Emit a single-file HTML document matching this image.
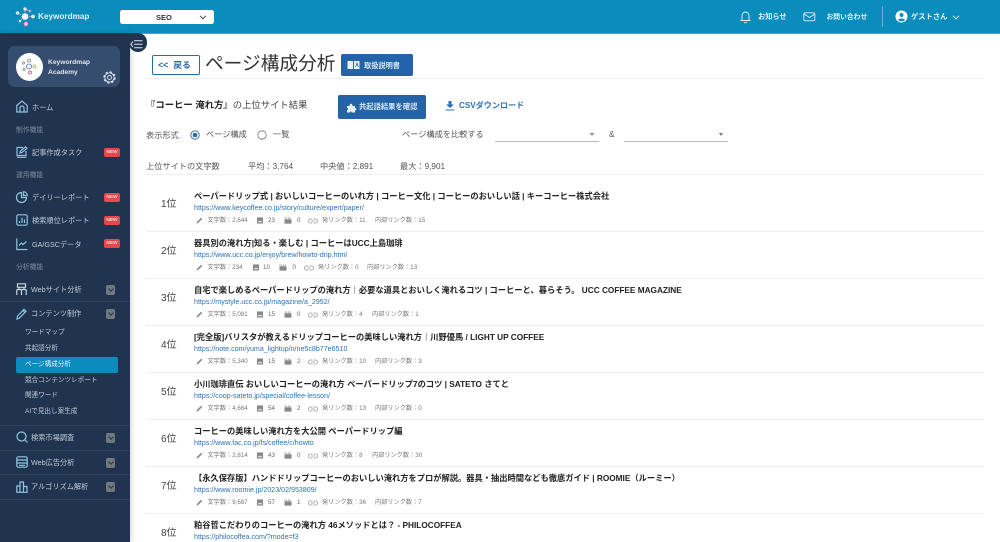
<!DOCTYPE html>
<html lang="ja"><head><meta charset="utf-8"><style>
html,body{margin:0;padding:0;width:1000px;height:542px;overflow:hidden;background:#fff}
body{position:relative;font-family:"Liberation Sans","Noto Sans CJK JP",sans-serif;color:#333}
.a{position:absolute;white-space:nowrap;line-height:1}
svg{position:absolute;overflow:visible}
.nav{color:#c3ccd6;font-size:7.2px}
.sec{color:#7d8b9b;font-size:6.8px}
.new{position:absolute;left:104px;width:16px;height:9px;background:#e5474b;border-radius:2px;color:#f8d5d5;font-size:4.8px;font-weight:bold;text-align:center;line-height:9px}
.chev{position:absolute;left:105.5px;width:9.5px;height:10px;background:#72787f;border-radius:2px}
.chev:after{content:"";position:absolute;left:3px;top:2.2px;width:3px;height:3px;border-right:1px solid #20344f;border-bottom:1px solid #20344f;transform:rotate(45deg)}
.ln{position:absolute;left:0;width:130px;height:1px;background:#2d4461}
.ic{fill:none;stroke:#8fc4df;stroke-width:1.2}
.sub{color:#c3ccd6;font-size:6.6px;left:25px}
.t{left:194px;font-size:8.25px;font-weight:bold;color:#222;margin-top:1px}
.u{left:194px;font-size:7.1px;color:#2a72b8}
.m{font-size:6.2px;color:#777}
.m2{font-size:6.2px;color:#666}
.r{left:161px;font-size:10px;color:#444;margin-top:1px}
.hr{position:absolute;left:146px;width:838px;height:1px;background:#eee}
.g{color:#555;font-size:8.2px}
</style></head><body>

<!-- header -->
<div class="a" style="left:0;top:0;width:1000px;height:33px;background:#0a8dbd"></div>
<div class="a" style="left:0;top:32.5px;width:1000px;height:1px;background:#41a9cd"></div>
<svg style="left:15px;top:7px" width="26" height="20" viewBox="0 0 26 20">
<g stroke="#e5eef4" stroke-width=".6" fill="none"><path d="M10 9.500L2.500 6M10 9.500L10 2M10 9.500L18 9.500M10 9.500L11 17M10 2L15 4M10 9.500L5 14"/></g>
<circle cx="10" cy="9.500" r="3.800" fill="#fff" stroke="#3a70c0" stroke-width="1"/>
<circle cx="2.500" cy="6" r="1.700" fill="#d8e4ec"/><circle cx="10" cy="2" r="1.700" fill="#e9d9dc"/><circle cx="15" cy="4" r="1.300" fill="#c9a4b4"/>
<circle cx="18" cy="9.500" r="1.900" fill="#d9ecc8"/><circle cx="11" cy="17" r="2.200" fill="#f4c8e0" stroke="#d04a90" stroke-width=".7"/><circle cx="5" cy="14" r="1.300" fill="#e8e8e8"/>
</svg>
<div class="a" style="left:38px;top:12.5px;font-size:8.2px;color:#e6f1f7;font-weight:bold">Keywordmap</div>
<div class="a" style="left:120px;top:9.5px;width:94px;height:14px;background:#fff;border-radius:2.5px"></div>
<div class="a" style="left:156px;top:13.500px;font-size:7.500px;font-weight:bold;color:#333">SEO</div>
<svg style="left:199px;top:14.5px" width="8" height="5" viewBox="0 0 8 5"><path d="M1 .8L4 3.8L7 .8" fill="none" stroke="#444" stroke-width="1"/></svg>

<svg style="left:738.500px;top:10px" width="13" height="14" viewBox="0 0 13 14" fill="none" stroke="#e6f3f8" stroke-width=".9"><path d="M1.500 10.500h10M3 10.500V5.500a3.500 3.500 0 0 1 7 0v5M5 12.700h3"/></svg>
<div class="a" style="left:758px;top:13px;font-size:7.200px;font-weight:bold;color:#e6f3f8">お知らせ</div>
<svg style="left:803px;top:12px" width="13" height="10" viewBox="0 0 13 10" fill="none" stroke="#e6f3f8" stroke-width=".9"><rect x=".8" y=".8" width="11" height="8" rx="1.4"/><path d="M1 2l5.5 3.5L12 2"/></svg>
<div class="a" style="left:826.5px;top:14.500px;font-size:6.800px;font-weight:bold;color:#e6f3f8">お問い合わせ</div>
<div class="a" style="left:882px;top:6px;width:1px;height:21px;background:#5fb4d2"></div>
<svg style="left:895px;top:10px" width="13" height="13" viewBox="0 0 13 13"><circle cx="6.5" cy="6.5" r="6" fill="#fff"/><circle cx="6.5" cy="5" r="2" fill="#0a8dbd"/><path d="M3 10c.6-2 6.4-2 7 0a5 5 0 0 1-7 0z" fill="#0a8dbd"/></svg>
<div class="a" style="left:911px;top:12.5px;font-size:7.300px;color:#e6f3f8;font-weight:bold">ゲストさん</div>
<svg style="left:952px;top:14.5px" width="8" height="5" viewBox="0 0 8 5"><path d="M1 .8L4 3.8L7 .8" fill="none" stroke="#e6f3f8" stroke-width="1"/></svg>

<!-- sidebar -->
<div class="a" style="left:0;top:33px;width:130px;height:509px;background:#20344f;box-shadow:2px 0 5px rgba(0,0,0,.14)"></div>
<div class="a" style="left:129px;top:33px;width:18px;height:19px;background:#20344f;border-radius:0 9px 9px 9px"></div>
<svg style="left:130px;top:40px" width="13" height="9" viewBox="0 0 13 9" fill="none" stroke="#dfe8ef" stroke-width="1"><path d="M3 1.500L.8 4.200L3 7M4 .8h8.500M4 4.200h8.500M4 7.800h8.500"/></svg>
<div class="a" style="left:8px;top:46px;width:112px;height:41px;background:#354d6e;border-radius:7px"></div>
<div class="a" style="left:15.500px;top:52.500px;width:27px;height:28px;background:#fff;border-radius:50%"></div>
<svg style="left:21px;top:58px" width="17" height="17" viewBox="0 0 17 17"><g fill="none" stroke-width=".8"><circle cx="8" cy="8.500" r="2.500" stroke="#3a70c0"/><circle cx="8" cy="2.500" r="1.500" stroke="#888"/><circle cx="2.500" cy="5" r="1.100" stroke="#888"/><circle cx="13.500" cy="8.500" r="1.500" stroke="#9b6"/><circle cx="9" cy="14.500" r="1.500" stroke="#d04a70"/><circle cx="3" cy="11.500" r="1.100" stroke="#888"/></g></svg>
<div class="a" style="left:48px;top:60px;font-size:6.700px;font-weight:bold;color:#dfe6ee">Keywordmap</div>
<div class="a" style="left:48px;top:70px;font-size:6.700px;font-weight:bold;color:#dfe6ee">Academy</div>
<svg style="left:103px;top:71px" width="13" height="13" viewBox="0 0 13 13" fill="none" stroke="#dfe6ee"><circle cx="6.500" cy="6.500" r="2" stroke-width=".9"/><circle cx="6.500" cy="6.500" r="4.600" stroke-width=".9"/><circle cx="6.500" cy="6.500" r="5.500" stroke-width="1.300" stroke-dasharray="2.300 2.020"/></svg>

<svg style="left:16px;top:100px" width="12" height="13" viewBox="0 0 12 13"><path class="ic" d="M.8 5.500L6 1l5.200 4.500V12H.8zM4 12V8a2 2 0 0 1 4 0v4"/></svg>
<div class="a nav" style="left:32px;top:104px">ホーム</div>
<div class="a sec" style="left:16px;top:128px">制作機能</div>
<svg style="left:16px;top:146px" width="12" height="12" viewBox="0 0 12 12"><path class="ic" d="M7 1.500H1v8h9V5M4 7l.5-2L9.500.8l1.500 1.500L6 6.500zM1 11.300h9.500"/></svg>
<div class="a nav" style="left:32px;top:149px">記事作成タスク</div>
<div class="new" style="top:148px">NEW</div>
<div class="a sec" style="left:16px;top:173px">運用機能</div>
<svg style="left:16px;top:191px" width="12" height="12" viewBox="0 0 12 12"><path class="ic" d="M5.500 1.500a5 5 0 1 0 5 5h-5zM7.500 .7a4 4 0 0 1 3.800 3.800H7.500z"/></svg>
<div class="a nav" style="left:32px;top:194px">デイリーレポート</div>
<div class="new" style="top:193px">NEW</div>
<svg style="left:16px;top:214px" width="12" height="12" viewBox="0 0 12 12"><rect class="ic" x=".8" y=".8" width="10.400" height="10.400" rx="1.500"/><path class="ic" d="M3.500 9V7M6 9V3.500M8.500 9V5.500"/></svg>
<div class="a nav" style="left:32px;top:217px">検索順位レポート</div>
<div class="new" style="top:216px">NEW</div>
<svg style="left:16px;top:238px" width="12" height="12" viewBox="0 0 12 12"><path class="ic" d="M.8 .5V11.500H11.500M3 7.500L5.500 5l1.500 1.500L10.500 3.500"/></svg>
<div class="a nav" style="left:32px;top:241px">GA/GSCデータ</div>
<div class="new" style="top:239px">NEW</div>
<div class="a sec" style="left:16px;top:265px">分析機能</div>
<svg style="left:16px;top:283px" width="11" height="13" viewBox="0 0 11 13"><path class="ic" style="stroke:#c8d4de" d="M1.500 .8h8v3.500h-8zM.8 6.500h9.400M.8 6.500v5.500M5.500 6.500v5.500M10.200 6.500v5.500M3 4.300v2.200M8 4.300v2.200"/></svg>
<div class="a nav" style="left:31px;top:286px">Webサイト分析</div>
<div class="chev" style="top:285px"></div>
<div class="ln" style="top:301px"></div>
<svg style="left:16px;top:308px" width="11" height="12" viewBox="0 0 11 12"><path class="ic" d="M1 11l.6-3L8 1.200l2 2L3.500 10zM7 2.500l2 2"/></svg>
<div class="a nav" style="left:31px;top:310px">コンテンツ制作</div>
<div class="chev" style="top:309px"></div>
<div class="a sub" style="top:330px">ワードマップ</div>
<div class="a sub" style="top:346px">共起語分析</div>
<div class="a" style="left:16px;top:356.500px;width:101.500px;height:16px;background:#0a8dbd;border-radius:2px"></div>
<div class="a sub" style="top:362px;color:#e4f0f6">ページ構成分析</div>
<div class="a sub" style="top:377.500px">競合コンテンツレポート</div>
<div class="a sub" style="top:393px">関連ワード</div>
<div class="a sub" style="top:408.500px">AIで見出し案生成</div>
<div class="ln" style="top:425px"></div>
<svg style="left:16px;top:431px" width="12" height="12" viewBox="0 0 12 12"><circle class="ic" cx="5.500" cy="5.500" r="4.500"/><path class="ic" d="M8.500 8.500L11.500 11.500"/></svg>
<div class="a nav" style="left:31px;top:434px">検索市場調査</div>
<div class="chev" style="top:433px"></div>
<div class="ln" style="top:450px"></div>
<svg style="left:16px;top:456px" width="12" height="12" viewBox="0 0 12 12"><rect class="ic" x=".8" y=".8" width="10.400" height="10.400" rx="1.500"/><path class="ic" d="M.8 4h10.400M.8 7h10.400M3 9.300h6"/></svg>
<div class="a nav" style="left:31px;top:459px">Web広告分析</div>
<div class="chev" style="top:458px"></div>
<div class="ln" style="top:474px"></div>
<svg style="left:16px;top:481px" width="12" height="12" viewBox="0 0 12 12"><path class="ic" d="M.8 11.300V5h3.200v6.300M4 11.300V1h3.500v10.300M7.500 11.300V5.500h3.500v5.800M.3 11.300h11.400"/></svg>
<div class="a nav" style="left:31px;top:483px">アルゴリズム解析</div>
<div class="chev" style="top:482px"></div>
<div class="ln" style="top:499px"></div>

<!-- page head -->
<div class="a" style="left:152px;top:55px;box-sizing:border-box;width:48px;height:20px;border:1px solid #2b69ad;border-radius:2px;color:#2b69ad;font-size:8.800px;line-height:18px;padding-left:5px;font-weight:bold;word-spacing:2.500px">&lt;&lt; 戻る</div>
<div class="a" style="left:205px;top:55px;font-size:18.700px;color:#333">ページ構成分析</div>
<div class="a" style="left:341px;top:53.500px;width:71.500px;height:22.500px;background:#2563a9;border-radius:2px"></div>
<svg style="left:346.500px;top:60px" width="13" height="10" viewBox="0 0 13 10"><path d="M.5 1h5.500v8H.5zM7 1h5.500v8H7z" fill="#e8f0f7"/><path d="M8.500 7L10 3l1.500 4" fill="none" stroke="#2563a9" stroke-width=".8"/></svg>
<div class="a" style="left:364px;top:62px;font-size:7.200px;font-weight:bold;color:#dbe6f1">取扱説明書</div>
<div class="hr" style="top:78px"></div>

<div class="a" style="left:146px;top:101px;font-size:9.350px;color:#444"><b style="color:#222">『コーヒー 淹れ方』</b>の上位サイト結果</div>
<div class="a" style="left:338px;top:95px;width:88px;height:23.500px;background:#2563a9;border-radius:2px"></div>
<svg style="left:346px;top:101.500px" width="11" height="11" viewBox="0 0 11 11"><path d="M1 4h2.500c0-3 3-3 3 0H9v2.200c1.800-.4 1.800 2.600 0 2.300V10.500H5.500c.3-1.500-2-1.500-1.700 0H1V8c1.500.3 1.500-2.300 0-2z" fill="#e8f0f7"/></svg>
<div class="a" style="left:359px;top:103px;font-size:7.300px;font-weight:bold;color:#dbe6f1">共起語結果を確認</div>
<svg style="left:445px;top:100.500px" width="10" height="10" viewBox="0 0 10 10"><path d="M3.500 0h3v3.500H9L5 7 1 3.500h2.500zM.5 8.500h9v1h-9z" fill="#2b72bd"/></svg>
<div class="a" style="left:459px;top:101.500px;font-size:8.100px;color:#2b72bd;font-weight:bold">CSVダウンロード</div>

<div class="a g" style="left:146px;top:131.500px">表示形式</div>
<svg style="left:190px;top:129.500px" width="10" height="10" viewBox="0 0 10 10"><circle cx="5" cy="5" r="4.200" fill="none" stroke="#2b69ad" stroke-width=".9"/><circle cx="5" cy="5" r="2.300" fill="#2b69ad"/></svg>
<div class="a g" style="left:206px;top:131px">ページ構成</div>
<svg style="left:257px;top:129.500px" width="10" height="10" viewBox="0 0 10 10"><circle cx="5" cy="5" r="4.200" fill="none" stroke="#777" stroke-width=".8"/></svg>
<div class="a g" style="left:273px;top:131px">一覧</div>
<div class="a g" style="left:402px;top:131px">ページ構成を比較する</div>
<div class="a" style="left:495px;top:141px;width:104px;height:1px;background:#bbb"></div>
<div class="a" style="left:589.500px;top:133px;width:0;height:0;border:2.500px solid transparent;border-top:3px solid #777"></div>
<div class="a g" style="left:609px;top:131px">&amp;</div>
<div class="a" style="left:624px;top:141px;width:104px;height:1px;background:#bbb"></div>
<div class="a" style="left:718.500px;top:133px;width:0;height:0;border:2.500px solid transparent;border-top:3px solid #777"></div>

<div class="a g" style="left:146px;top:162.500px">上位サイトの文字数</div>
<div class="a g" style="left:248px;top:162.500px">平均：3,764</div>
<div class="a g" style="left:320px;top:162.500px">中央値：2,891</div>
<div class="a g" style="left:400px;top:162.500px">最大：9,901</div>
<div class="hr" style="top:174px"></div>

<!-- reusable meta icons -->
<svg width="0" height="0" style="left:0;top:0"><defs>
<symbol id="pen" viewBox="0 0 8 8"><path d="M.5 7.500l.6-2L5.800.8l1.400 1.400L2.500 6.900z" fill="#888"/></symbol>
<symbol id="pic" viewBox="0 0 8 8"><path d="M.5.5h7v7h-7z" fill="#888"/><path d="M1.500 6l1.500-2 1.200 1.300L5.300 4l1.300 2z" fill="#eee"/></symbol>
<symbol id="film" viewBox="0 0 9 8"><path d="M.5 2.500h8v5h-8zM.5 .5h1v1.500h-1zM2.500 .5h1v1.500h-1zM4.500 .5h1v1.500h-1zM6.500 .5h1v1.500h-1z" fill="#888"/></symbol>
<symbol id="lnk" viewBox="0 0 10 6"><path d="M4.500 1H2.500a2 2 0 0 0 0 4h2M5.500 1h2a2 2 0 0 1 0 4h-2M3 3h4" fill="none" stroke="#999" stroke-width=".8"/></symbol>
</defs></svg>

<!-- row 1 -->
<div class="a r" style="top:198.500px">1位</div>
<div class="a t" style="top:191.500px">ペーパードリップ式 | おいしいコーヒーのいれ方 | コーヒー文化 | コーヒーのおいしい話 | キーコーヒー株式会社</div>
<div class="a u" style="top:204.500px">https://www.keycoffee.co.jp/story/culture/expert/paper/</div>
<svg style="left:195.500px;top:216.500px" width="7" height="7"><use href="#pen"/></svg><div class="a m" style="left:207.500px;top:218px">文字数：2,644</div>
<svg style="left:256px;top:216.500px" width="8" height="7"><use href="#pic"/></svg><div class="a m2" style="left:268px;top:218px">23</div>
<svg style="left:283px;top:216.500px" width="10" height="7"><use href="#film"/></svg><div class="a m2" style="left:297px;top:218px">0</div>
<svg style="left:308px;top:217.500px" width="10" height="6"><use href="#lnk"/></svg><div class="a m" style="left:322px;top:218px">発リンク数：11</div>
<div class="a m" style="left:375px;top:218px">内部リンク数：15</div>
<div class="hr" style="top:231px"></div>

<!-- row 2 -->
<div class="a r" style="top:245.500px">2位</div>
<div class="a t" style="top:238.500px">器具別の淹れ方|知る・楽しむ | コーヒーはUCC上島珈琲</div>
<div class="a u" style="top:251.500px">https://www.ucc.co.jp/enjoy/brew/howto-drip.html</div>
<svg style="left:195.500px;top:263.500px" width="7" height="7"><use href="#pen"/></svg><div class="a m" style="left:207.500px;top:265px">文字数：234</div>
<svg style="left:252px;top:263.500px" width="8" height="7"><use href="#pic"/></svg><div class="a m2" style="left:263px;top:265px">10</div>
<svg style="left:278px;top:263.500px" width="10" height="7"><use href="#film"/></svg><div class="a m2" style="left:292.500px;top:265px">0</div>
<svg style="left:303.500px;top:264.500px" width="10" height="6"><use href="#lnk"/></svg><div class="a m" style="left:318px;top:265px">発リンク数：0</div>
<div class="a m" style="left:367px;top:265px">内部リンク数：13</div>
<div class="hr" style="top:278px"></div>

<!-- row 3 -->
<div class="a r" style="top:292.500px">3位</div>
<div class="a t" style="top:285.500px">自宅で楽しめるペーパードリップの淹れ方｜必要な道具とおいしく淹れるコツ | コーヒーと、暮らそう。 UCC COFFEE MAGAZINE</div>
<div class="a u" style="top:298.500px">https://mystyle.ucc.co.jp/magazine/a_2952/</div>
<svg style="left:195.500px;top:310.500px" width="7" height="7"><use href="#pen"/></svg><div class="a m" style="left:207.500px;top:312px">文字数：5,081</div>
<svg style="left:256px;top:310.500px" width="8" height="7"><use href="#pic"/></svg><div class="a m2" style="left:268px;top:312px">15</div>
<svg style="left:283px;top:310.500px" width="10" height="7"><use href="#film"/></svg><div class="a m2" style="left:297px;top:312px">0</div>
<svg style="left:308px;top:311.500px" width="10" height="6"><use href="#lnk"/></svg><div class="a m" style="left:322px;top:312px">発リンク数：4</div>
<div class="a m" style="left:372px;top:312px">内部リンク数：1</div>
<div class="hr" style="top:325px"></div>

<!-- row 4 -->
<div class="a r" style="top:339.500px">4位</div>
<div class="a t" style="top:332.500px">[完全版]バリスタが教えるドリップコーヒーの美味しい淹れ方｜川野優馬 / LIGHT UP COFFEE</div>
<div class="a u" style="top:345.500px">https://note.com/yuma_lightup/n/ne5c8b77e6510</div>
<svg style="left:195.500px;top:357.500px" width="7" height="7"><use href="#pen"/></svg><div class="a m" style="left:207.500px;top:359px">文字数：5,340</div>
<svg style="left:256px;top:357.500px" width="8" height="7"><use href="#pic"/></svg><div class="a m2" style="left:268px;top:359px">15</div>
<svg style="left:283px;top:357.500px" width="10" height="7"><use href="#film"/></svg><div class="a m2" style="left:297px;top:359px">2</div>
<svg style="left:308px;top:358.500px" width="10" height="6"><use href="#lnk"/></svg><div class="a m" style="left:322px;top:359px">発リンク数：10</div>
<div class="a m" style="left:375px;top:359px">内部リンク数：3</div>
<div class="hr" style="top:372px"></div>

<!-- row 5 -->
<div class="a r" style="top:386.500px">5位</div>
<div class="a t" style="top:379.500px">小川珈琲直伝 おいしいコーヒーの淹れ方 ペーパードリップ7のコツ | SATETO さてと</div>
<div class="a u" style="top:392.500px">https://coop-sateto.jp/special/coffee-lesson/</div>
<svg style="left:195.500px;top:404.500px" width="7" height="7"><use href="#pen"/></svg><div class="a m" style="left:207.500px;top:406px">文字数：4,664</div>
<svg style="left:256px;top:404.500px" width="8" height="7"><use href="#pic"/></svg><div class="a m2" style="left:268px;top:406px">54</div>
<svg style="left:283px;top:404.500px" width="10" height="7"><use href="#film"/></svg><div class="a m2" style="left:297px;top:406px">2</div>
<svg style="left:308px;top:405.500px" width="10" height="6"><use href="#lnk"/></svg><div class="a m" style="left:322px;top:406px">発リンク数：13</div>
<div class="a m" style="left:375px;top:406px">内部リンク数：0</div>
<div class="hr" style="top:419px"></div>

<!-- row 6 -->
<div class="a r" style="top:433.500px">6位</div>
<div class="a t" style="top:426.500px">コーヒーの美味しい淹れ方を大公開 ペーパードリップ編</div>
<div class="a u" style="top:439.500px">https://www.fac.co.jp/fs/coffee/c/howto</div>
<svg style="left:195.500px;top:451.500px" width="7" height="7"><use href="#pen"/></svg><div class="a m" style="left:207.500px;top:453px">文字数：2,814</div>
<svg style="left:256px;top:451.500px" width="8" height="7"><use href="#pic"/></svg><div class="a m2" style="left:268px;top:453px">43</div>
<svg style="left:283px;top:451.500px" width="10" height="7"><use href="#film"/></svg><div class="a m2" style="left:297px;top:453px">0</div>
<svg style="left:308px;top:452.500px" width="10" height="6"><use href="#lnk"/></svg><div class="a m" style="left:322px;top:453px">発リンク数：8</div>
<div class="a m" style="left:372px;top:453px">内部リンク数：30</div>
<div class="hr" style="top:466px"></div>

<!-- row 7 -->
<div class="a r" style="top:480.500px">7位</div>
<div class="a t" style="top:473.500px">【永久保存版】ハンドドリップコーヒーのおいしい淹れ方をプロが解説。器具・抽出時間なども徹底ガイド | ROOMIE（ルーミー）</div>
<div class="a u" style="top:486.500px">https://www.roomie.jp/2023/02/953809/</div>
<svg style="left:195.500px;top:498.500px" width="7" height="7"><use href="#pen"/></svg><div class="a m" style="left:207.500px;top:500px">文字数：9,687</div>
<svg style="left:256px;top:498.500px" width="8" height="7"><use href="#pic"/></svg><div class="a m2" style="left:268px;top:500px">57</div>
<svg style="left:283px;top:498.500px" width="10" height="7"><use href="#film"/></svg><div class="a m2" style="left:297px;top:500px">1</div>
<svg style="left:308px;top:499.500px" width="10" height="6"><use href="#lnk"/></svg><div class="a m" style="left:322px;top:500px">発リンク数：36</div>
<div class="a m" style="left:375px;top:500px">内部リンク数：7</div>
<div class="hr" style="top:513px"></div>

<!-- row 8 -->
<div class="a r" style="top:527.500px">8位</div>
<div class="a t" style="top:520.500px">粕谷哲こだわりのコーヒーの淹れ方 46メソッドとは？ - PHILOCOFFEA</div>
<div class="a u" style="top:533.500px">https://philocoffea.com/?mode=f3</div>
</body></html>
